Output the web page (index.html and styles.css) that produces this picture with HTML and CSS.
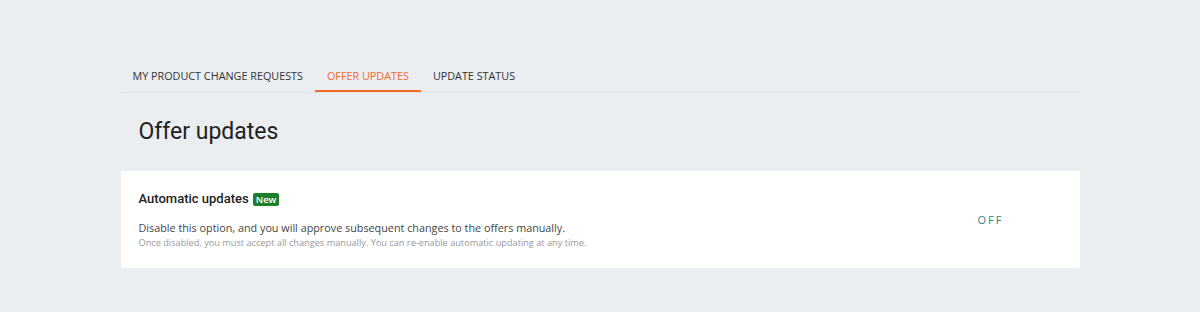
FILE: index.html
```html
<!DOCTYPE html>
<html lang="en">
<head>
  <meta charset="UTF-8" />
  <title>Offer updates</title>
  <link rel="stylesheet" href="styles.css">
</head>
<body>
  <div class="page">
    <nav class="tabs">
      <a class="tab">My product change requests</a>
      <a class="tab active">Offer updates</a>
      <a class="tab">Update status</a>
    </nav>

    <h1 class="title">Offer updates</h1>

    <section class="card">
      <div class="card-text">
        <h3>Automatic updates <span class="badge">New</span></h3>
        <p class="desc">Disable this option, and you will approve subsequent changes to the offers manually.</p>
        <p class="hint">Once disabled, you must accept all changes manually. You can re-enable automatic updating at any time.</p>
      </div>
      <div class="toggle">OFF</div>
    </section>
  </div>
</body>
</html>
```

FILE: styles.css
```css
body {
  margin: 0;
  background-color: #ebeef1;
  font-family: "Open Sans", Arial, sans-serif;
  color: #333;
}

.page {
  width: 959px;
  margin: 0 auto;
  padding-top: 60px;
}

.tabs {
  display: flex;
  border-bottom: 1px solid #dfe3e7;
}

.tab {
  padding: 8px 12px 6px;
  font-size: 10.8px;
  line-height: 16px;
  text-transform: uppercase;
  color: #333;
  border-bottom: 2px solid transparent;
}

.tab.active {
  color: #f26b2a;
  border-bottom-color: #f26b2a;
}

.title {
  margin: 0;
  padding: 25px 18px;
  font-family: Roboto, Arial, sans-serif;
  font-weight: 400;
  font-size: 23px;
  line-height: 28px;
  color: #222;
}

.card {
  background: #fff;
  display: flex;
  align-items: center;
  padding: 20px 18px 18px;
}

.card-text {
  flex-grow: 1;
}

.card h3 {
  margin: 0 0 12px;
  font-family: Roboto, Arial, sans-serif;
  font-weight: 500;
  font-size: 13px;
  line-height: 16px;
  color: #222;
  display: flex;
  align-items: center;
  gap: 4px;
}

.badge {
  background: #1d7f2a;
  color: #fff;
  font-family: "Open Sans", Arial, sans-serif;
  font-size: 9.5px;
  font-weight: 600;
  padding: 0 3px;
  border-radius: 2px;
  line-height: 13px;
}

.desc {
  margin: 0;
  font-size: 10.8px;
  color: #444;
  line-height: 17px;
}

.hint {
  margin: 0;
  font-size: 9.2px;
  color: #999;
  line-height: 14px;
}

.toggle {
  width: 84px;
  font-size: 11px;
  letter-spacing: 2px;
  color: #2a8a7c;
  padding-bottom: 2px;
}
```
